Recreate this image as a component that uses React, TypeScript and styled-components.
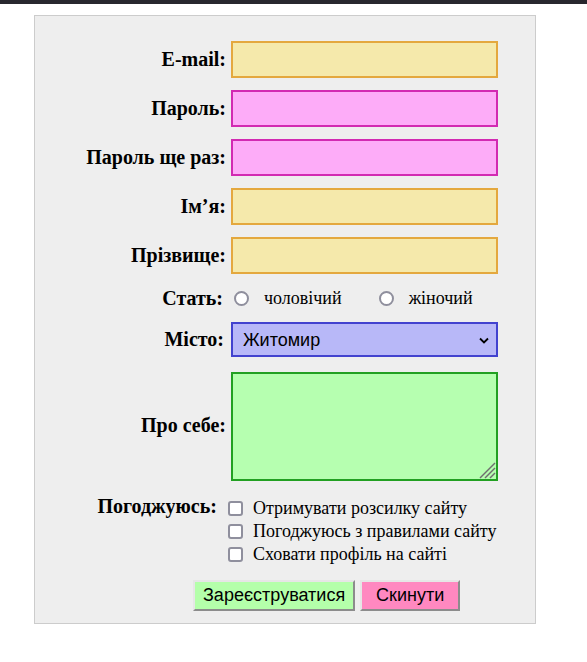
import React from 'react';
import styled, { createGlobalStyle } from 'styled-components';

const GlobalStyle = createGlobalStyle`
    html, body {
        margin: 0;
        padding: 0;
        background: #ffffff;
        font-family: "Liberation Serif", "Times New Roman", serif;
    }
`;

const TopBar = styled.div`
    height: 4px;
    background: #28272e;
`;

const Panel = styled.form`
    width: 463px;
    margin: 11px 0 0 34px;
    padding: 25px 37px 12px 0;
    background: #eeeeee;
    border: 1px solid #cccccc;
`;

const Grid = styled.div`
    display: grid;
    grid-template-columns: 191px 267px;
    column-gap: 5px;
    row-gap: 12px;
    align-items: center;
`;

type LabelProps = {
    $inset?: number,
    $top?: boolean,
}

const Label = styled.label<LabelProps>`
    font-size: 20px;
    font-weight: bold;
    color: #000;
    text-align: right;
    padding-right: ${props => props.$inset || 0}px;
    align-self: ${props => props.$top ? 'start' : 'center'};
    margin-top: ${props => props.$top ? '2px' : '0'};
`;

type FieldProps = {
    $bg: string,
    $border: string,
}

const TextInput = styled.input<FieldProps>`
    box-sizing: border-box;
    width: 267px;
    height: 37px;
    margin: 0;
    padding: 0 6px;
    font: 18px "Liberation Sans", Arial, sans-serif;
    background: ${props => props.$bg};
    border: 2px solid ${props => props.$border};
    outline: none;
`;

const RadioRow = styled.div`
    display: flex;
    align-items: center;
    height: 24px;
    padding-left: 3px;
    font-size: 18px;
`;

const RadioOption = styled.label`
    display: flex;
    align-items: center;
    margin-right: 37px;
`;

const Radio = styled.input`
    appearance: none;
    box-sizing: border-box;
    width: 15px;
    height: 15px;
    margin: 0 15px 0 0;
    border: 2px solid #8f8f9d;
    border-radius: 50%;
    background: #ffffff;
`;

const SelectWrap = styled.div`
    position: relative;
    width: 267px;
    height: 35px;
`;

const Select = styled.select`
    appearance: none;
    box-sizing: border-box;
    width: 100%;
    height: 100%;
    margin: 0;
    padding: 0 30px 0 10px;
    font: 18px "Liberation Sans", Arial, sans-serif;
    color: #000;
    background: #b8b8f8;
    border: 2px solid #4242cf;
    border-radius: 0;
    outline: none;
`;

const Chevron = styled.svg`
    position: absolute;
    right: 9px;
    top: 15px;
    pointer-events: none;
`;

const AreaWrap = styled.div`
    position: relative;
    width: 267px;
    height: 109px;
    margin-top: 3px;
`;

const TextArea = styled.textarea`
    box-sizing: border-box;
    display: block;
    width: 100%;
    height: 100%;
    margin: 0;
    padding: 4px;
    background: #b6ffb0;
    border: 2px solid #22a022;
    outline: none;
    resize: none;
`;

const Grip = styled.svg`
    position: absolute;
    right: 2px;
    bottom: 2px;
    pointer-events: none;
`;

const CheckList = styled.div`
    display: flex;
    flex-direction: column;
    margin: 4px 0 0 -3px;
`;

const CheckOption = styled.label`
    display: flex;
    align-items: center;
    height: 23px;
    font-size: 18px;
    color: #000;
`;

const Checkbox = styled.input`
    appearance: none;
    box-sizing: border-box;
    width: 15px;
    height: 15px;
    margin: 0 10px 0 0;
    border: 2px solid #8f8f9d;
    border-radius: 3px;
    background: #ffffff;
`;

const Buttons = styled.div`
    display: flex;
    gap: 5px;
    margin: 14px 0 0 158px;
`;

type ButtonProps = {
    $bg: string,
}

const Button = styled.button<ButtonProps>`
    box-sizing: border-box;
    height: 31px;
    min-width: 100px;
    padding: 0 8px;
    font: 18px "Liberation Sans", Arial, sans-serif;
    color: #000;
    background: ${props => props.$bg};
    border: 2px solid;
    border-color: #e6e6e6 #8c8c8c #8c8c8c #e6e6e6;
    border-radius: 0;
`;

const yellow = { bg: '#f5e9ab', border: '#e4a83e' };
const pink = { bg: '#fdacf8', border: '#d22ab2' };

const App = () => {
    return (
        <>
            <GlobalStyle />
            <TopBar />
            <Panel onSubmit={e => e.preventDefault()}>
                <Grid>
                    <Label htmlFor="email">E-mail:</Label>
                    <TextInput id="email" type="email" $bg={yellow.bg} $border={yellow.border} />

                    <Label htmlFor="pass">Пароль:</Label>
                    <TextInput id="pass" type="password" $bg={pink.bg} $border={pink.border} />

                    <Label htmlFor="pass2">Пароль ще раз:</Label>
                    <TextInput id="pass2" type="password" $bg={pink.bg} $border={pink.border} />

                    <Label htmlFor="name">Ім’я:</Label>
                    <TextInput id="name" type="text" $bg={yellow.bg} $border={yellow.border} />

                    <Label htmlFor="surname">Прізвище:</Label>
                    <TextInput id="surname" type="text" $bg={yellow.bg} $border={yellow.border} />

                    <Label $inset={3}>Стать:</Label>
                    <RadioRow>
                        <RadioOption><Radio type="radio" name="sex" />чоловічий</RadioOption>
                        <RadioOption><Radio type="radio" name="sex" />жіночий</RadioOption>
                    </RadioRow>

                    <Label htmlFor="city" $inset={2}>Місто:</Label>
                    <SelectWrap>
                        <Select id="city" defaultValue="Житомир">
                            <option>Житомир</option>
                            <option>Київ</option>
                            <option>Львів</option>
                        </Select>
                        <Chevron width="10" height="7" viewBox="0 0 10 7">
                            <path d="M1 1.5 L5 5.5 L9 1.5" fill="none" stroke="#000" strokeWidth="1.8" />
                        </Chevron>
                    </SelectWrap>

                    <Label htmlFor="about">Про себе:</Label>
                    <AreaWrap>
                        <TextArea id="about" />
                        <Grip width="17" height="17" viewBox="0 0 17 17">
                            <g stroke="#6e6e6e" strokeWidth="1.4">
                                <line x1="16" y1="1" x2="1" y2="16" />
                                <line x1="16" y1="6" x2="6" y2="16" />
                                <line x1="16" y1="11" x2="11" y2="16" />
                            </g>
                        </Grip>
                    </AreaWrap>

                    <Label $inset={9} $top>Погоджуюсь:</Label>
                    <CheckList>
                        <CheckOption><Checkbox type="checkbox" />Отримувати розсилку сайту</CheckOption>
                        <CheckOption><Checkbox type="checkbox" />Погоджуюсь з правилами сайту</CheckOption>
                        <CheckOption><Checkbox type="checkbox" />Сховати профіль на сайті</CheckOption>
                    </CheckList>
                </Grid>
                <Buttons>
                    <Button type="submit" $bg="#b4ffaa">Зареєструватися</Button>
                    <Button type="reset" $bg="#ff88c0">Скинути</Button>
                </Buttons>
            </Panel>
        </>
    );
};

export default App;
